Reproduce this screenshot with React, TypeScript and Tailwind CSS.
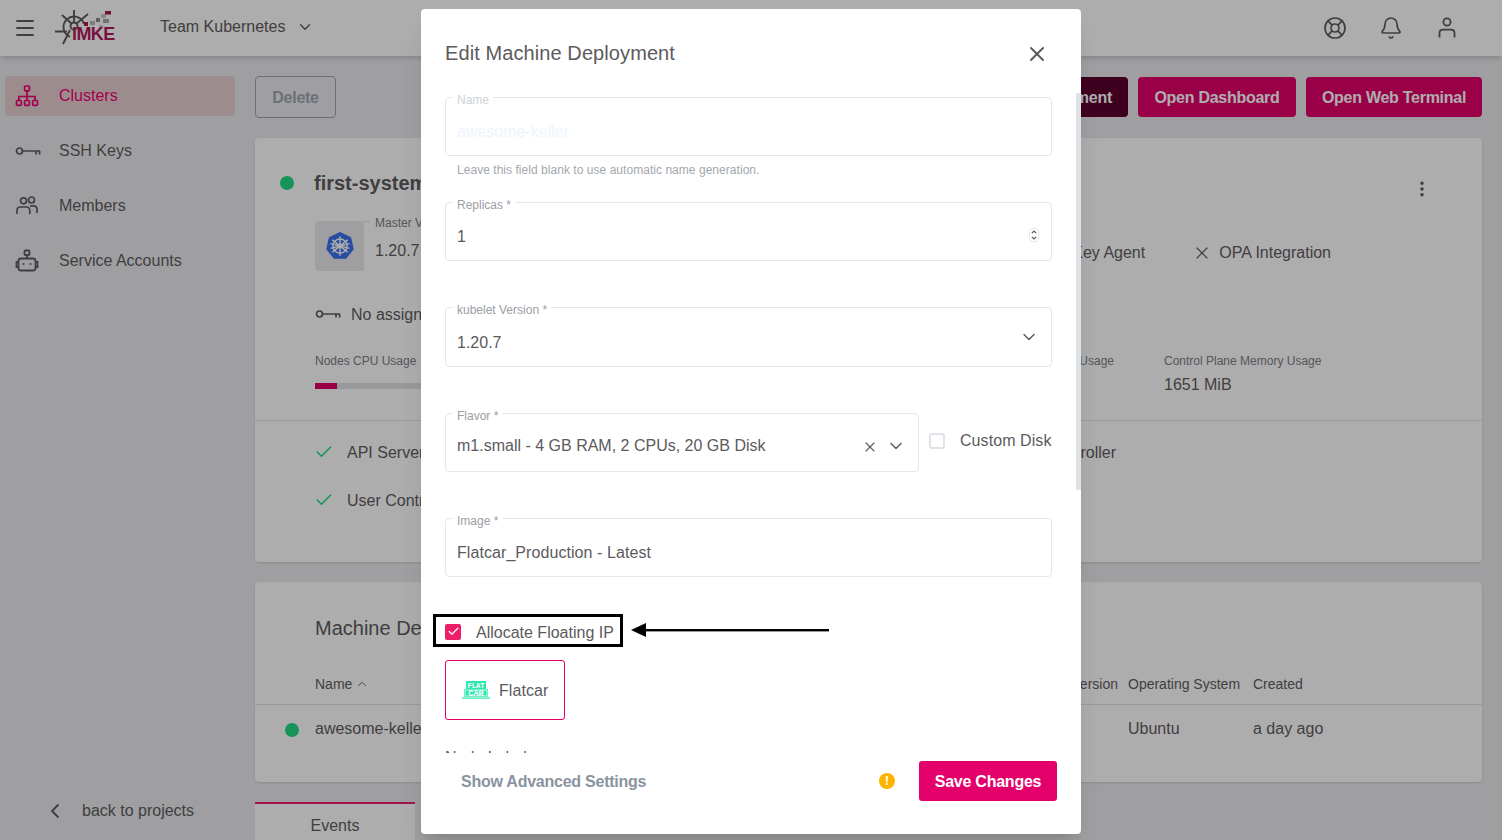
import React from 'react';
import { Menu, ChevronDown, ChevronUp, ChevronLeft, LifeBuoy, Bell, X, Check, EllipsisVertical } from 'lucide-react';

const font = { fontFamily: '"Liberation Sans", Arial, sans-serif' };

const ClustersIcon = ({ className }: { className?: string }) => (
  <svg viewBox="0 0 24 24" width="24" height="24" fill="none" stroke="currentColor" strokeWidth="1.7" className={className}>
    <rect x="9.6" y="2" width="4.8" height="4.8" rx="1" />
    <rect x="1.5" y="16.5" width="4.8" height="4.8" rx="1" />
    <rect x="9.6" y="16.5" width="4.8" height="4.8" rx="1" />
    <rect x="17.7" y="16.5" width="4.8" height="4.8" rx="1" />
    <path d="M12 7v9.5M3.9 16.5v-4h16.2v4" />
  </svg>
);

const KeyIcon = ({ className }: { className?: string }) => (
  <svg viewBox="0 0 26 12" width="26" height="12" fill="none" stroke="currentColor" strokeWidth="1.7" className={className}>
    <circle cx="4.5" cy="6" r="3" />
    <path d="M7.5 6H25M21 6v3.5M24.6 6v3.5" />
  </svg>
);

const MembersIcon = ({ className }: { className?: string }) => (
  <svg viewBox="0 0 24 24" width="24" height="24" fill="none" stroke="currentColor" strokeWidth="1.7" className={className}>
    <circle cx="8.5" cy="6.8" r="3" />
    <circle cx="16.5" cy="6" r="3" />
    <path d="M2 20v-3.5c0-2 1.5-3.5 3.5-3.5h6c2 0 3.3 1.5 3.3 3.5V20" />
    <path d="M15 11.8h3.5c2 0 3.5 1.5 3.5 3.5V19" />
  </svg>
);

const BotIcon = ({ className }: { className?: string }) => (
  <svg viewBox="0 0 24 24" width="24" height="24" fill="none" stroke="currentColor" strokeWidth="1.8" className={className}>
    <rect x="9.5" y="1.5" width="5" height="4.5" rx="1" />
    <path d="M12 6v3.5" />
    <rect x="3.5" y="9.5" width="17" height="12" rx="2.5" />
    <path d="M3.5 13H1.5v5h2M20.5 13h2v5h-2" />
    <circle cx="8.5" cy="15" r="1" fill="currentColor" stroke="none" />
    <circle cx="15.5" cy="15" r="1" fill="currentColor" stroke="none" />
  </svg>
);

const PersonIcon = () => (
  <svg viewBox="0 0 24 24" width="24" height="24" fill="none" stroke="currentColor" strokeWidth="1.8">
    <circle cx="12" cy="6" r="3.6" />
    <path d="M4.5 21.5v-4.5c0-2 1.5-3.4 3.5-3.4h8c2 0 3.5 1.4 3.5 3.4v4.5" />
  </svg>
);

const Logo = () => (
  <div className="relative w-[62px] h-[40px]">
    <svg viewBox="0 0 62 40" width="62" height="40" className="absolute left-0 top-0" fill="none">
      <g stroke="#5f5c5e" strokeWidth="1.9">
        <path d="M15 27.8A10.5 10.5 0 1 1 29 15" />
        <circle cx="19" cy="17" r="3.5" />
        <path d="M19 1v13M0 22.5h12M7 6l10 9M33 5L21 15M15 21L8 35" />
      </g>
      <rect x="29" y="13" width="4" height="4" fill="#a8174f" />
      <rect x="35" y="12" width="5" height="4" fill="#b9b9b9" />
      <rect x="41" y="9" width="4" height="4" fill="#8c8c8c" />
      <rect x="46" y="5" width="5" height="4" fill="#c9c9c9" />
      <rect x="50" y="2" width="6" height="3.5" fill="#a8174f" />
      <rect x="48" y="10" width="6" height="4" fill="#a8a8a8" />
      <rect x="44" y="16" width="4" height="3" fill="#cfcfcf" />
    </svg>
    <span className="absolute left-[17px] top-[13px] text-[18px] leading-[24px] font-bold tracking-[-0.6px] text-[#b2185c]">iMKE</span>
  </div>
);

const K8sLogo = () => (
  <svg viewBox="0 0 32 32" width="30" height="30">
    <polygon points="16,1 27.8,6.7 30.7,19.4 22.5,29.6 9.5,29.6 1.3,19.4 4.2,6.7" fill="#3a70ec" />
    <g stroke="#fff" fill="none" strokeWidth="1.5">
      <circle cx="16" cy="16" r="7.5" />
      <circle cx="16" cy="16" r="1.8" fill="#fff" />
      <path d="M16 5.5v21M7.8 9.5l16.4 13M24.2 9.5L7.8 22.5M5.8 18.5l20.4-5M26.2 18.5l-20.4-5" />
    </g>
  </svg>
);

const FlatcarLogo = () => (
  <svg viewBox="0 0 28 18" width="28" height="18">
    <rect x="4" y="0" width="20" height="8" fill="#2de8ae" />
    <rect x="2" y="8" width="24" height="8" fill="#2de8ae" />
    <rect x="3" y="9" width="22" height="6" fill="none" stroke="#fff" strokeWidth="0.7" />
    <rect x="0" y="16.5" width="28" height="1.2" fill="#2de8ae" />
    <text x="14" y="6.6" textAnchor="middle" fontSize="7" fontWeight="700" fill="#fff" fontFamily="Liberation Mono, monospace">FLAT</text>
    <text x="14" y="14.6" textAnchor="middle" fontSize="8.5" fontWeight="700" fill="#fff" fontFamily="Liberation Mono, monospace">CAR</text>
  </svg>
);

const Spinner = () => (
  <svg viewBox="0 0 10 14" width="10" height="14" fill="none">
    <rect x="0.5" y="0.5" width="9" height="13" rx="3" stroke="#e4e6e9" />
    <path d="M2.8 5.2L5 3l2.2 2.2M2.8 8.8L5 11l2.2-2.2" stroke="#5c5a5d" strokeWidth="1.2" />
  </svg>
);

type FieldProps = { label: string; className?: string; dim?: boolean; children?: React.ReactNode };

const Field = ({ label, className = '', dim, children }: FieldProps) => (
  <div className={`relative flex items-center rounded border border-[#e4e6e9] px-[11px] ${className}`}>
    <span className={`absolute left-[7px] top-[-6px] bg-white px-1 text-xs leading-4 ${dim ? 'text-[#cfd2d6]' : 'text-[#9a9ea5]'}`}>{label}</span>
    {children}
  </div>
);

const navItems = [
  { label: 'SSH Keys', icon: <KeyIcon className="text-[#5f5c60]" /> },
  { label: 'Members', icon: <MembersIcon className="text-[#5f5c60]" /> },
  { label: 'Service Accounts', icon: <BotIcon className="text-[#5f5c60]" /> },
];

const Dot = () => <span className="block w-[14px] h-[14px] rounded-full bg-[#1fd984]" />;

export default function App() {
  return (
    <div style={font} className="relative h-[840px] w-[1502px] overflow-hidden bg-[#eaebee] text-base text-[#5f5c60]">
      {/* Header */}
      <header className="relative z-10 flex h-14 items-center bg-white pl-[13px] pr-[43px] shadow-md">
        <Menu size={24} strokeWidth={1.8} />
        <div className="ml-[18px] mt-[1px]"><Logo /></div>
        <span className="ml-[43px] mb-[2px]">Team Kubernetes</span>
        <ChevronDown size={18} strokeWidth={1.8} className="ml-[11px] mb-[3px]" />
        <div className="ml-auto flex items-center gap-8">
          <LifeBuoy size={24} strokeWidth={1.7} />
          <Bell size={24} strokeWidth={1.7} />
          <PersonIcon />
        </div>
      </header>

      <div className="flex h-[784px]">
        {/* Sidebar */}
        <aside className="flex w-[255px] shrink-0 flex-col pl-[5px] pr-5 pt-5">
          <div className="flex h-10 items-center gap-[20px] rounded bg-[#e6ced1] pl-[10px] text-[#f00074]">
            <ClustersIcon />
            <span>Clusters</span>
          </div>
          {navItems.map((item) => (
            <div key={item.label} className="mt-[15px] flex h-10 items-center pl-[10px]">
              <span className="flex w-[44px] items-center">{item.icon}</span>
              <span>{item.label}</span>
            </div>
          ))}
          <div className="mt-auto mb-[9px] flex h-10 items-center pl-[38px]">
            <ChevronLeft size={24} strokeWidth={1.8} />
            <span className="ml-[15px]">back to projects</span>
          </div>
        </aside>

        {/* Main */}
        <main className="min-w-0 flex-1 pr-5 pt-5">
          <div className="flex h-[42px] items-center gap-[10px] tracking-[-0.27px]">
            <button className="mr-auto h-[42px] w-[81px] rounded border border-[#9ea5b0] pt-[2px] font-bold text-[#9ea5b0]">Delete</button>
            <button className="h-10 rounded bg-[#5d002f] px-4 pt-[2px] font-bold text-white">Add Machine Deployment</button>
            <button className="h-10 w-[158px] rounded bg-[#e4006a] pt-[2px] font-bold text-white">Open Dashboard</button>
            <button className="h-10 w-[176px] rounded bg-[#e4006a] pt-[2px] font-bold text-white">Open Web Terminal</button>
          </div>

          {/* Cluster card */}
          <section className="mt-5 h-[424px] rounded bg-white shadow-sm">
            <div className="h-[283px] border-b border-[#e3e3e3] pl-[60px]">
              <div className="relative flex items-center pt-[32px]">
                <span className="absolute left-[-35px] top-[38px]"><Dot /></span>
                <span className="-ml-[1px] text-xl font-bold leading-[26px]">first-system</span>
                <EllipsisVertical size={20} strokeWidth={2.2} className="absolute right-[50px] top-[41px]" />
              </div>
              <div className="mt-[25px] flex h-[50px] items-center pr-[151px]">
                <div className="flex h-[50px] w-[49px] items-center justify-center rounded-l bg-[#eaebee]"><K8sLogo /></div>
                <div className="relative flex h-[50px] w-[60px] flex-col border-t border-[#e3e3e3] pl-[11px]">
                  <span className="absolute left-[6px] top-[-7px] whitespace-nowrap bg-white px-[5px] text-xs leading-4 text-[#7c8088]">Master Version</span>
                  <span className="mt-[17px] leading-6">1.20.7</span>
                </div>
                <span className="ml-auto mt-[14px]">SSH Key Agent</span>
                <X size={20} strokeWidth={1.4} className="ml-[47px] mt-[14px]" />
                <span className="ml-[7px] mt-[14px]">OPA Integration</span>
              </div>
              <div className="mt-[31px] flex h-6 items-center">
                <KeyIcon />
                <span className="ml-[10px] mt-[2px]">No assigned keys</span>
              </div>
              <div className="mt-[27px] flex pr-[160px]">
                <div className="w-[560px]">
                  <span className="block text-xs leading-4 text-[#7c8088]">Nodes CPU Usage</span>
                  <div className="mt-[14px] h-[6px] bg-[#e1e2e5]">
                    <div className="h-full w-[22px] bg-[#e4006a]" />
                  </div>
                </div>
                <span className="ml-auto text-xs leading-4 text-[#7c8088]">Control Plane CPU Usage</span>
                <div className="ml-[50px] w-[158px]">
                  <span className="block text-xs leading-4 text-[#7c8088]">Control Plane Memory Usage</span>
                  <span className="mt-[4px] block leading-6">1651 MiB</span>
                </div>
              </div>
            </div>
            <div className="flex justify-between pl-[60px] pr-[366px] pt-[20px]">
              <div className="flex flex-col gap-6">
                <div className="flex h-6 items-center gap-[13px]">
                  <Check size={20} strokeWidth={1.8} className="mb-[3px] -ml-[1px] text-[#1fd984]" />
                  <span>API Server</span>
                </div>
                <div className="flex h-6 items-center gap-[13px]">
                  <Check size={20} strokeWidth={1.8} className="mb-[3px] -ml-[1px] text-[#1fd984]" />
                  <span>User Controller Manager</span>
                </div>
              </div>
              <span className="leading-6">Machine Controller</span>
            </div>
          </section>

          {/* Machine deployments card */}
          <section className="mt-5 h-[200px] rounded bg-white shadow-sm">
            <div className="pl-[60px] pt-[33px] text-xl font-normal leading-[26px]">Machine Deployments</div>
            <div className="mt-[30px] flex h-[34px] items-center border-b border-[#e3e3e3] pl-[60px] pb-[8px] text-sm">
              <span>Name</span>
              <ChevronUp size={14} strokeWidth={1.6} className="ml-[3px]" />
              <span className="ml-auto pr-[10px]">kubelet Version</span>
              <span className="w-[125px]">Operating System</span>
              <span className="w-[229px]">Created</span>
            </div>
            <div className="flex h-[48px] items-center pl-[30px]">
              <span className="mt-[2px]"><Dot /></span>
              <span className="ml-4">awesome-keller</span>
              <span className="ml-auto w-[125px]">Ubuntu</span>
              <span className="w-[229px]">a day ago</span>
            </div>
          </section>

          {/* Tabs */}
          <div className="mt-5 flex h-10 w-40 justify-center border-t-2 border-[#f01f6e] bg-white pt-[10px]">Events</div>
        </main>
      </div>

      {/* Backdrop */}
      <div className="absolute inset-0 z-20 bg-black/[0.32]" />

      {/* Dialog */}
      <div className="absolute left-[421px] top-[9px] z-30 flex h-[825px] w-[660px] flex-col overflow-hidden rounded bg-white text-[#5c5a5d] shadow-xl">
        <div className="flex h-[81px] shrink-0 items-start pl-6 pr-[32px] pt-[31px]">
          <h2 className="text-xl leading-[26px] tracking-[0.09px]">Edit Machine Deployment</h2>
          <X size={24} strokeWidth={1.9} className="ml-auto mt-[2px]" />
        </div>

        <div className="min-h-0 flex-1 overflow-hidden pl-6 pr-[29px] pt-[7px]">
          <Field label="Name" dim className="h-[59px] pt-[10px]">
            <span className="text-[#eef4fb]">awesome-keller</span>
          </Field>
          <p className="mt-[6px] pl-3 text-xs leading-4 tracking-[0.04px] text-[#a3a7ad]">Leave this field blank to use automatic name generation.</p>
          <Field label="Replicas *" className="mt-6 h-[59px] pt-[10px]">
            <span>1</span>
            <span className="ml-auto mr-[1px] mb-[4px] flex"><Spinner /></span>
          </Field>
          <Field label="kubelet Version *" className="mt-[46px] h-[60px] pt-3">
            <span>1.20.7</span>
            <ChevronDown size={20} strokeWidth={1.7} className="ml-auto mb-3 mr-[1px]" />
          </Field>
          <div className="mt-[46px] flex items-start">
            <Field label="Flavor *" className="h-[59px] w-[474px] pt-[6px]">
              <span>m1.small - 4 GB RAM, 2 CPUs, 20 GB Disk</span>
              <X size={16} strokeWidth={1.7} className="ml-auto mt-[2px]" />
              <ChevronDown size={20} strokeWidth={1.7} className="ml-[8px] mr-[1px]" />
            </Field>
            <div className="ml-[10px] mt-[16px] flex items-center">
              <span className="h-4 w-4 rounded-[3px] border-2 border-[#e0e3e7]" />
              <span className="ml-[15px] tracking-[0.07px]">Custom Disk</span>
            </div>
          </div>
          <Field label="Image *" className="mt-[46px] h-[59px] pt-[10px]">
            <span className="tracking-[0.07px]">Flatcar_Production - Latest</span>
          </Field>

          <div className="mt-[37px] flex items-center">
            <div className="-ml-3 flex h-[33px] w-[190px] items-center border-[3px] border-black pl-[9px]">
              <span className="mt-[2px] flex h-4 w-4 items-center justify-center rounded-[2px] bg-[#ed1f6b]">
                <Check size={13} strokeWidth={2.2} className="text-white" />
              </span>
              <span className="ml-[15px] mt-[4px] whitespace-nowrap">Allocate Floating IP</span>
            </div>
            <svg viewBox="0 0 198 16" width="198" height="16" className="ml-[8px] mb-[2px]">
              <path d="M0 8L15 1v14z" fill="#000" />
              <rect x="14" y="7" width="184" height="2.4" fill="#000" />
            </svg>
          </div>

          <div className="mt-[13px] flex h-[60px] w-[120px] items-center rounded-[3px] border border-[#e4006a] pl-[16px]">
            <FlatcarLogo />
            <span className="ml-[9px] mt-[2px] tracking-[0.07px]">Flatcar</span>
          </div>
          <h3 className="mt-[26px] leading-6">Node Labels</h3>
        </div>

        <div className="flex h-[81px] shrink-0 items-start pl-6 pr-6 pt-[8px] tracking-[-0.24px]">
          <button className="flex h-10 items-center px-4 pt-[2px] font-bold text-[#8a93a0]">Show Advanced Settings</button>
          <span className="ml-auto mr-6 mt-[12px] flex h-4 w-4 items-center justify-center rounded-full bg-[#fdb400] text-xs font-bold leading-none text-white">!</span>
          <button className="h-10 w-[138px] rounded-[3px] bg-[#e4006a] pt-[1px] font-bold text-white">Save Changes</button>
        </div>

        {/* Scrollbar */}
        <div className="absolute right-0 top-[84px] h-[397px] w-[5px] bg-[#dfe3e8]" />
      </div>
    </div>
  );
}
